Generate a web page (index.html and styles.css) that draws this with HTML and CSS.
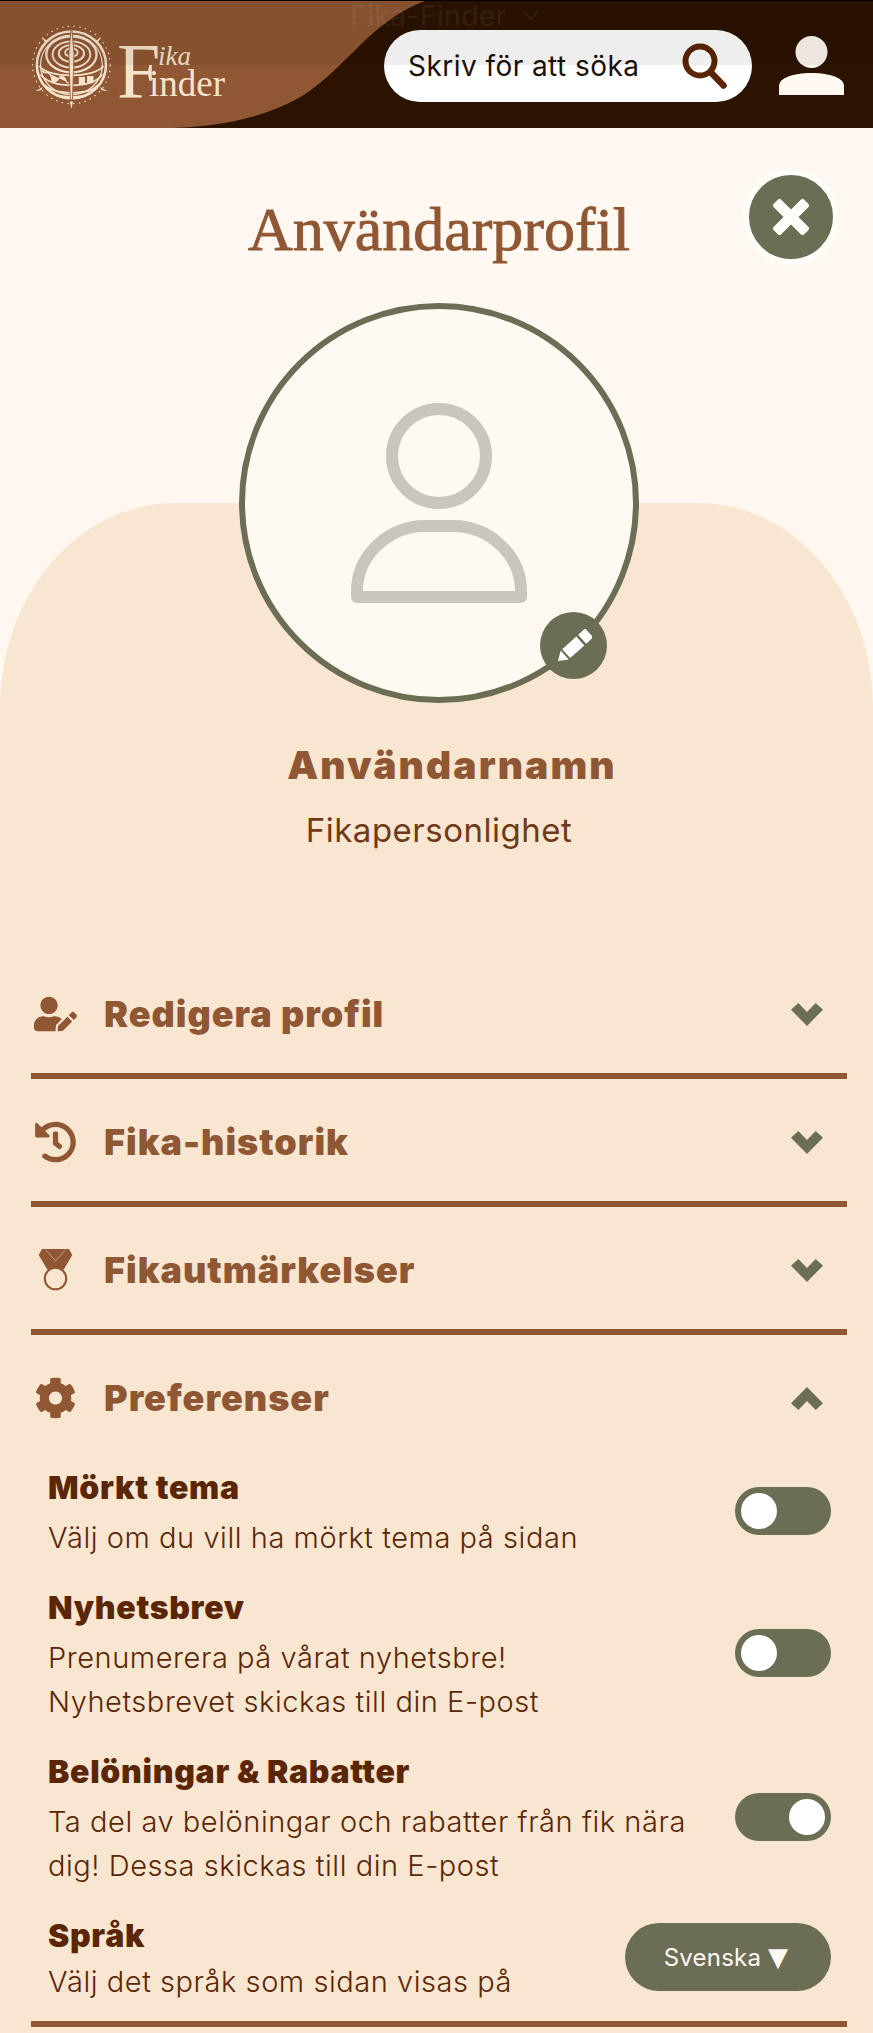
FILE: index.html
```html
<!DOCTYPE html>
<html lang="sv">
<head>
<meta charset="utf-8">
<title>Fika-Finder</title>
<link rel="stylesheet" href="styles.css">
</head>
<body>
<header class="topbar">
  <svg class="wave" viewBox="0 0 873 128" preserveAspectRatio="none" aria-hidden="true">
    <path d="M0 0H425C370 20 345 70 300 97C260 120 210 128 160 128H0Z" fill="#8f5733"/>
  </svg>
  <a class="logo">
    <svg class="logo-mark" viewBox="0 0 84 84" aria-hidden="true">
      <g fill="none" stroke="#f7e4cd">
        <circle cx="40.5" cy="41" r="37" stroke-width="1" stroke-dasharray="1.5 4"/>
        <ellipse cx="40.5" cy="41" rx="33" ry="32" stroke-width="2.4"/>
        <ellipse cx="40.5" cy="41" rx="29.5" ry="28.5" stroke-width="1.2"/>
        <ellipse cx="40.5" cy="31" rx="24" ry="17" stroke-width="2.2"/>
        <ellipse cx="40.5" cy="31" rx="18" ry="12.5" stroke-width="1.8"/>
        <ellipse cx="40.5" cy="30" rx="12" ry="8" stroke-width="2"/>
        <ellipse cx="40.5" cy="29" rx="6" ry="4" stroke-width="1.8"/>
        <path d="M10 42C18 54 62 54 71 42M11 50C20 64 62 64 70 50M15 60C24 70 58 70 66 60M22 67C32 73 50 73 59 67" stroke-width="1.6"/>
      </g>
      <path d="M12 46c3 5 5 0 8 4s0 8 5 7 2-6 7-5 2 7 6 6M48 53v6h5v-6zM56 52v6h5v-6z" fill="#f7e4cd" stroke="#f7e4cd" stroke-width="1"/>
      <path d="M40.5 3L43 30L41.5 74H39.5L38 30Z" fill="#f7e4cd" stroke="#8f5733" stroke-width=".8"/>
      <path d="M12 14L17 18L15 19ZM69 14L64 18L66 19ZM6 66L13 62L12 65ZM75 66L68 62L69 65ZM40.5 83L39 76H42Z" fill="#f7e4cd"/>
    </svg>
    <span class="wordmark"><span class="wm-f">F</span><span class="wm-ika">ika</span><span class="wm-inder">inder</span></span>
  </a>
  <form class="search">
    <span class="search-text">Skriv för att söka</span>
    <svg class="search-icon" viewBox="0 0 45 46" aria-hidden="true">
      <circle cx="18" cy="18" r="14.5" fill="none" stroke="#5a2606" stroke-width="6"/>
      <path d="M28.5 29L41.5 42.5" stroke="#5a2606" stroke-width="6.5" stroke-linecap="round"/>
    </svg>
  </form>
  <svg class="account" viewBox="0 0 65 60" aria-hidden="true">
    <circle cx="32.5" cy="16" r="16" fill="#fff8f1"/>
    <path d="M0 59V50C0 42 14 37 32.5 37S65 42 65 50V59Z" fill="#fff8f1"/>
  </svg>
  <div class="chrome-tint">
    <span class="chrome-title">Fika-Finder</span>
    <svg class="chrome-chevron" viewBox="0 0 16 10" aria-hidden="true"><path d="M1 1L8 8L15 1" fill="none" stroke="#ffffff" stroke-width="1.4"/></svg>
  </div>
</header>

<main>
  <section class="hero">
    <h1 class="page-title">Användarprofil</h1>
    <button class="close" type="button" aria-label="Stäng">
      <svg viewBox="0 0 38 38" aria-hidden="true"><path d="M9 1.5L19 11.5L29 1.5Q30.5 0 32 1.5L36.5 6Q38 7.5 36.5 9L26.5 19L36.5 29Q38 30.5 36.5 32L32 36.5Q30.5 38 29 36.5L19 26.5L9 36.5Q7.5 38 6 36.5L1.5 32Q0 30.5 1.5 29L11.5 19L1.5 9Q0 7.5 1.5 6L6 1.5Q7.5 0 9 1.5Z" fill="#fffdf9"/></svg>
    </button>
    <div class="avatar">
      <svg class="avatar-person" viewBox="0 0 176 200" aria-hidden="true">
        <circle cx="88" cy="53" r="47" fill="none" stroke="#cbc5c0" stroke-width="12"/>
        <path d="M6 194V188C6 152 38 123 74 123H102C138 123 170 152 170 188V194Z" fill="none" stroke="#cbc5c0" stroke-width="12" stroke-linejoin="round"/>
      </svg>
      <button class="avatar-edit" type="button" aria-label="Redigera bild">
        <svg viewBox="0 0 36 34" aria-hidden="true">
          <g transform="translate(2 32) rotate(-42)" fill="#ffffff">
            <path d="M0 0L9 -6V6Z"/>
            <path d="M11 -6H30V6H11Z"/>
            <path d="M32.5 -6H42V6H32.5Z"/>
          </g>
        </svg>
      </button>
    </div>
  </section>

  <section class="panel">
    <div class="identity">
      <h2 class="username">Användarnamn</h2>
      <p class="persona">Fikapersonlighet</p>
    </div>

    <div class="sections">
      <div class="section">
        <div class="section-head">
          <svg class="section-icon" viewBox="0 0 640 512" aria-hidden="true"><path d="M224 256c70.7 0 128-57.3 128-128S294.7 0 224 0 96 57.3 96 128s57.3 128 128 128zm89.6 32h-16.7c-22.2 10.2-46.9 16-72.9 16s-50.6-5.8-72.9-16h-16.7C60.2 288 0 348.2 0 422.4V464c0 26.5 21.5 48 48 48h274.9c-2.4-6.8-3.4-14-2.6-21.3l6.8-60.9 1.2-11.1 7.9-7.9 77.3-77.3c-24.5-27.7-60-45.5-99.9-45.5zm45.3 145.3l-6.8 61c-1.1 10.2 7.5 18.8 17.6 17.6l60.9-6.8 137.9-137.9-71.7-71.7-137.9 137.8zM633 268.9L595.1 231c-9.3-9.3-24.5-9.3-33.8 0l-37.8 37.8-4.1 4.1 71.8 71.7 41.8-41.8c9.3-9.4 9.3-24.5 0-33.9z"/></svg>
          <h3 class="section-title">Redigera profil</h3>
          <svg class="chevron" viewBox="0 0 32 23" aria-hidden="true"><path d="M0 6.7L7.3 0L16 9L24.7 0L32 6.7L16 23Z"/></svg>
        </div>
      </div>
      <div class="section">
        <div class="section-head">
          <svg class="section-icon" viewBox="0 0 512 512" aria-hidden="true"><path d="M504 255.531c.253 136.64-111.18 248.372-247.82 248.468-59.015.042-113.223-20.53-155.822-54.911-11.077-8.94-11.905-25.541-1.839-35.607l11.267-11.267c8.609-8.609 22.353-9.551 31.891-1.984C173.062 425.135 212.781 440 256 440c101.705 0 184-82.311 184-184 0-101.705-82.311-184-184-184-48.814 0-93.149 18.969-126.068 49.932l50.754 50.754c10.08 10.08 2.941 27.314-11.313 27.314H24c-8.837 0-16-7.163-16-16V38.627c0-14.254 17.234-21.393 27.314-11.314l49.372 49.372C129.209 34.136 189.552 8 256 8c136.81 0 247.747 110.78 248 247.531zm-180.912 78.784l9.823-12.63c8.138-10.463 6.253-25.542-4.21-33.679L288 256.349V152c0-13.255-10.745-24-24-24h-16c-13.255 0-24 10.745-24 24v135.651l65.409 50.874c10.463 8.137 25.541 6.253 33.679-4.21z"/></svg>
          <h3 class="section-title">Fika-historik</h3>
          <svg class="chevron" viewBox="0 0 32 23" aria-hidden="true"><path d="M0 6.7L7.3 0L16 9L24.7 0L32 6.7L16 23Z"/></svg>
        </div>
      </div>
      <div class="section">
        <div class="section-head">
          <svg class="section-icon" viewBox="-14 0 128 125" aria-hidden="true">
            <path d="M10 0H90L100 18L74 62H26L0 18Z"/>
            <path d="M20 2L50 35L80 2" fill="none" stroke="#f9e6d0" stroke-width="1.5"/>
            <circle cx="50" cy="88" r="32" fill="#f9e6d0" stroke="#8f5733" stroke-width="6"/>
          </svg>
          <h3 class="section-title">Fikautmärkelser</h3>
          <svg class="chevron" viewBox="0 0 32 23" aria-hidden="true"><path d="M0 6.7L7.3 0L16 9L24.7 0L32 6.7L16 23Z"/></svg>
        </div>
      </div>
      <div class="section section-open">
        <div class="section-head">
          <svg class="section-icon" viewBox="0 0 512 512" aria-hidden="true"><path d="M487.4 315.7l-42.6-24.6c4.3-23.2 4.3-47 0-70.2l42.6-24.6c4.9-2.8 7.1-8.6 5.5-14-11.1-35.6-30-67.8-54.7-94.6-3.8-4.1-10-5.1-14.8-2.3L380.8 110c-17.9-15.4-38.5-27.3-60.8-35.1V25.8c0-5.6-3.9-10.5-9.4-11.7-36.7-8.2-74.3-7.8-109.2 0-5.5 1.2-9.4 6.1-9.4 11.7V75c-22.2 7.9-42.8 19.8-60.8 35.1L88.7 85.5c-4.9-2.8-11-1.9-14.8 2.3-24.7 26.7-43.6 58.9-54.7 94.6-1.7 5.4.6 11.2 5.5 14L67.3 221c-4.3 23.2-4.3 47 0 70.2l-42.6 24.6c-4.9 2.8-7.1 8.6-5.5 14 11.1 35.6 30 67.8 54.7 94.6 3.8 4.1 10 5.1 14.8 2.3l42.6-24.6c17.9 15.4 38.5 27.3 60.8 35.1v49.2c0 5.6 3.9 10.5 9.4 11.7 36.7 8.2 74.3 7.8 109.2 0 5.5-1.2 9.4-6.1 9.4-11.7v-49.2c22.2-7.9 42.8-19.8 60.8-35.1l42.6 24.6c4.9 2.8 11 1.9 14.8-2.3 24.7-26.7 43.6-58.9 54.7-94.6 1.5-5.5-.7-11.3-5.6-14.1zM256 336c-44.1 0-80-35.9-80-80s35.9-80 80-80 80 35.9 80 80-35.9 80-80 80z"/></svg>
          <h3 class="section-title">Preferenser</h3>
          <svg class="chevron chevron-up" viewBox="0 0 32 23" aria-hidden="true"><path d="M0 6.7L7.3 0L16 9L24.7 0L32 6.7L16 23Z"/></svg>
        </div>
        <div class="prefs">
          <div class="pref">
            <div class="pref-text">
              <h4 class="pref-title">Mörkt tema</h4>
              <p class="pref-desc">Välj om du vill ha mörkt tema på sidan</p>
            </div>
            <span class="toggle"><span class="knob"></span></span>
          </div>
          <div class="pref">
            <div class="pref-text">
              <h4 class="pref-title">Nyhetsbrev</h4>
              <p class="pref-desc">Prenumerera på vårat nyhetsbre!<br>Nyhetsbrevet skickas till din E-post</p>
            </div>
            <span class="toggle"><span class="knob"></span></span>
          </div>
          <div class="pref">
            <div class="pref-text">
              <h4 class="pref-title">Belöningar &amp; Rabatter</h4>
              <p class="pref-desc">Ta del av belöningar och rabatter från fik nära dig! Dessa skickas till din E-post</p>
            </div>
            <span class="toggle toggle-on"><span class="knob"></span></span>
          </div>
          <div class="pref pref-last">
            <div class="pref-text">
              <h4 class="pref-title">Språk</h4>
              <p class="pref-desc">Välj det språk som sidan visas på</p>
            </div>
            <button class="lang" type="button">Svenska <span class="lang-caret">▼</span></button>
          </div>
        </div>
      </div>
    </div>
  </section>
</main>
</body>
</html>
```
FILE: styles.css
```css
* { box-sizing: border-box; }
html, body { margin: 0; padding: 0; }
body {
  width: 873px;
  height: 2033px;
  overflow: hidden;
  background: #fff8f1;
  font-family: "Inter", "Liberation Sans", sans-serif;
  color: #5a2606;
}
h1, h2, h3, h4, p { margin: 0; }
button { border: 0; padding: 0; cursor: pointer; font: inherit; }

/* Top bar */
.topbar {
  position: relative;
  height: 128px;
  display: flex;
  align-items: center;
  background: #2b1300;
  border-top: 1px solid #000;
}
.wave { position: absolute; inset: 0; width: 100%; height: 100%; }
.logo {
  position: relative;
  display: flex;
  align-items: flex-start;
  width: 350px;
  height: 127px;
  padding: 21px 0 0 29px;
}
.logo-mark { width: 88px; height: 88px; flex: none; }
.wordmark {
  position: relative;
  display: block;
  margin-top: 2px;
  width: 120px;
  height: 80px;
  color: #f7e4cd;
  font-family: "Liberation Serif", serif;
}
.wm-f { position: absolute; left: 0; top: 7px; font-size: 78px; line-height: 80px; }
.wm-inder { position: absolute; left: 32px; top: 44px; font-size: 37px; line-height: 32px; }
.wm-ika { position: absolute; left: 41px; top: 20px; font-size: 27px; line-height: 24px; font-style: italic; }
.search {
  position: relative;
  margin-left: 34px;
  margin-top: 2px;
  width: 368px;
  height: 72px;
  border-radius: 36px;
  background: #fff;
  display: flex;
  align-items: center;
  justify-content: space-between;
  padding: 0 25px 0 24px;
}
.search-text { font-size: 28px; letter-spacing: 0.45px; color: #1c1007; white-space: nowrap; }
.search-icon { width: 45px; height: 46px; flex: none; }
.account { position: relative; margin-left: 27px; margin-top: 2px; width: 65px; height: 60px; flex: none; }
.chrome-tint {
  position: absolute;
  left: 0;
  right: 0;
  top: 0;
  height: 64px;
  background: rgba(0, 0, 0, 0.065);
  pointer-events: none;
}
.chrome-title {
  position: absolute;
  left: 350px;
  top: 0;
  font-size: 29px;
  line-height: 30px;
  color: rgba(255, 255, 255, 0.07);
}
.chrome-chevron { position: absolute; left: 523px; top: 10px; width: 16px; height: 10px; opacity: 0.08; }

/* Hero */
.hero {
  position: relative;
  z-index: 1;
  height: 575px;
  margin-bottom: -200px;
  padding: 68px 0 0 5px;
  display: flex;
  flex-direction: column;
  align-items: center;
}
.page-title {
  font-family: "Liberation Serif", serif;
  font-weight: 400;
  font-size: 62px;
  line-height: 66px;
  color: #8f5733;
  white-space: nowrap;
  -webkit-text-stroke: 0.9px #8f5733;
}
.close {
  position: absolute;
  left: 743px;
  top: 41px;
  width: 96px;
  height: 96px;
  border-radius: 50%;
  background: #6b6d55;
  border: 6px solid #fffdf9;
  display: flex;
  align-items: center;
  justify-content: center;
}
.close svg { width: 38px; height: 38px; }
.avatar {
  position: relative;
  margin-top: 41px;
  width: 400px;
  height: 400px;
  border-radius: 50%;
  border: 6px solid #6b6d55;
  background: #fff9f2;
  display: flex;
  align-items: center;
  justify-content: center;
}
.avatar-person { width: 176px; height: 200px; }
.avatar-edit {
  position: absolute;
  left: 295px;
  top: 303px;
  width: 67px;
  height: 67px;
  border-radius: 50%;
  background: #6b6d55;
  display: flex;
  align-items: center;
  justify-content: center;
}
.avatar-edit svg { width: 36px; height: 34px; }

/* Peach panel */
.panel {
  background: #f9e6d0;
  border-radius: 175px 175px 0 0 / 205px 205px 0 0;
  padding: 239px 26px 6px 31px;
}
.identity { display: flex; flex-direction: column; align-items: center; }
.username {
  margin-left: 26px;
  font-size: 39px;
  line-height: 46px;
  font-weight: 900;
  letter-spacing: 2.1px;
  color: #8f5733;
}
.persona {
  margin-top: 22px;
  font-size: 33px;
  line-height: 40px;
  font-weight: 400;
  letter-spacing: 0.5px;
  color: #6e3a1a;
}
.sections { margin-top: 101px; }
.section { border-bottom: 6px solid #8f5733; }
.section-head {
  height: 122px;
  padding: 4px 24px 0 3px;
  display: flex;
  align-items: center;
}
.section-icon { width: 43px; height: 42px; flex: none; fill: #8f5733; }
.section-title {
  margin-left: 27px;
  flex: 1;
  font-size: 36px;
  line-height: 44px;
  font-weight: 900;
  letter-spacing: 1px;
  color: #8f5733;
}
.chevron { width: 32px; height: 23px; fill: #6b6d55; flex: none; }
.chevron-up { transform: rotate(180deg); }

/* Preferences */
.prefs { padding: 9px 16px 0 17px; }
.pref {
  display: flex;
  align-items: center;
  justify-content: space-between;
  margin-bottom: 26px;
}
.pref-last { margin-bottom: 17px; }
.pref-text { flex: 1; max-width: 650px; }
.pref-title { font-size: 32px; line-height: 44px; font-weight: 900; letter-spacing: 0.7px; color: #5a2606; }
.pref-desc { margin-top: 6px; font-size: 29px; line-height: 44px; font-weight: 300; letter-spacing: 0.55px; color: #5a2606; }
.pref-last .pref-desc { margin-top: 2px; }
.toggle {
  display: flex;
  align-items: center;
  flex: none;
  width: 96px;
  height: 48px;
  padding: 0 6px;
  margin-bottom: 5px;
  border-radius: 24px;
  background: #6b6d55;
}
.toggle-on { justify-content: flex-end; }
.knob { width: 36px; height: 36px; border-radius: 50%; background: #fff; }
.lang {
  flex: none;
  width: 206px;
  height: 68px;
  margin-bottom: 4px;
  padding-right: 4px;
  border-radius: 34px;
  background: #6b6d55;
  color: #fff8f1;
  font-size: 24px;
  letter-spacing: 0.2px;
  font-family: "Inter", "DejaVu Sans", sans-serif;
  white-space: nowrap;
}
.lang-caret { font-family: "DejaVu Sans", sans-serif; font-size: 26px; }
```
